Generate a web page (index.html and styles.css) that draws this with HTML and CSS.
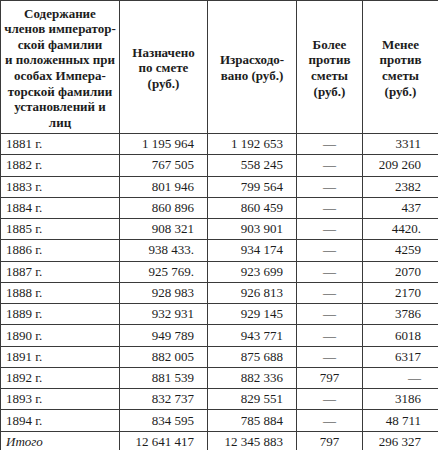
FILE: index.html
```html
<!DOCTYPE html>
<html lang="ru">
<head>
<meta charset="utf-8">
<link rel="stylesheet" href="styles.css">
</head>
<body>
<table class="budget">
<colgroup>
<col class="c1"><col class="c2"><col class="c3"><col class="c4"><col class="c5">
</colgroup>
<thead>
<tr class="head">
<th>Содержание<br>членов император-<br>ской фамилии<br>и положенных при<br>особах Импера-<br>торской фамилии<br>установлений и<br>лиц</th>
<th>Назначено<br>по смете<br>(руб.)</th>
<th>Израсходо-<br>вано (руб.)</th>
<th>Более<br>против<br>сметы<br>(руб.)</th>
<th>Менее<br>против<br>сметы<br>(руб.)</th>
</tr>
</thead>
<tbody>
<tr><td class="y">1881 г.</td><td class="n">1 195 964</td><td class="n">1 192 653</td><td class="d">—</td><td class="m">3311</td></tr>
<tr><td class="y">1882 г.</td><td class="n">767 505</td><td class="n">558 245</td><td class="d">—</td><td class="m">209 260</td></tr>
<tr><td class="y">1883 г.</td><td class="n">801 946</td><td class="n">799 564</td><td class="d">—</td><td class="m">2382</td></tr>
<tr><td class="y">1884 г.</td><td class="n">860 896</td><td class="n">860 459</td><td class="d">—</td><td class="m">437</td></tr>
<tr><td class="y">1885 г.</td><td class="n">908 321</td><td class="n">903 901</td><td class="d">—</td><td class="m">4420.</td></tr>
<tr><td class="y">1886 г.</td><td class="n">938 433.</td><td class="n">934 174</td><td class="d">—</td><td class="m">4259</td></tr>
<tr><td class="y">1887 г.</td><td class="n">925 769.</td><td class="n">923 699</td><td class="d">—</td><td class="m">2070</td></tr>
<tr><td class="y">1888 г.</td><td class="n">928 983</td><td class="n">926 813</td><td class="d">—</td><td class="m">2170</td></tr>
<tr><td class="y">1889 г.</td><td class="n">932 931</td><td class="n">929 145</td><td class="d">—</td><td class="m">3786</td></tr>
<tr><td class="y">1890 г.</td><td class="n">949 789</td><td class="n">943 771</td><td class="d">—</td><td class="m">6018</td></tr>
<tr><td class="y">1891 г.</td><td class="n">882 005</td><td class="n">875 688</td><td class="d">—</td><td class="m">6317</td></tr>
<tr><td class="y">1892 г.</td><td class="n">881 539</td><td class="n">882 336</td><td class="d">797</td><td class="m">—</td></tr>
<tr><td class="y">1893 г.</td><td class="n">832 737</td><td class="n">829 551</td><td class="d">—</td><td class="m">3186</td></tr>
<tr><td class="y">1894 г.</td><td class="n">834 595</td><td class="n">785 884</td><td class="d">—</td><td class="m">48 711</td></tr>
<tr><td class="y total">Итого</td><td class="n">12 641 417</td><td class="n">12 345 883</td><td class="d">797</td><td class="m">296 327</td></tr>
</tbody>
</table>
</body>
</html>
```
FILE: styles.css
```css
html, body {
  margin: 0;
  padding: 0;
  background: #ffffff;
}
body {
  font-family: "Liberation Serif", "DejaVu Serif", serif;
  color: #1c1c1c;
  font-size: 13px;
}
.budget {
  border-collapse: collapse;
  table-layout: fixed;
  width: 438px;
}
.c1 { width: 119px; }
.c2 { width: 88px; }
.c3 { width: 89px; }
.c4 { width: 66px; }
.c5 { width: 76px; }
.budget th,
.budget td {
  border: 1px solid #3a3a3a;
  padding: 0;
}
.budget .head th {
  height: 130px;
  font-weight: bold;
  line-height: 15.6px;
  text-align: center;
  vertical-align: middle;
  padding-top: 2px;
}
.budget tbody tr {
  height: 21.27px;
}
.budget td {
  line-height: 16px;
  vertical-align: middle;
  white-space: nowrap;
}
.budget td.y { padding-left: 5px; text-align: left; }
.budget td.total { font-style: italic; }
.budget td.n { text-align: right; padding-right: 13px; }
.budget td.d { text-align: center; }
.budget td.m { text-align: right; padding-right: 17px; }
```
